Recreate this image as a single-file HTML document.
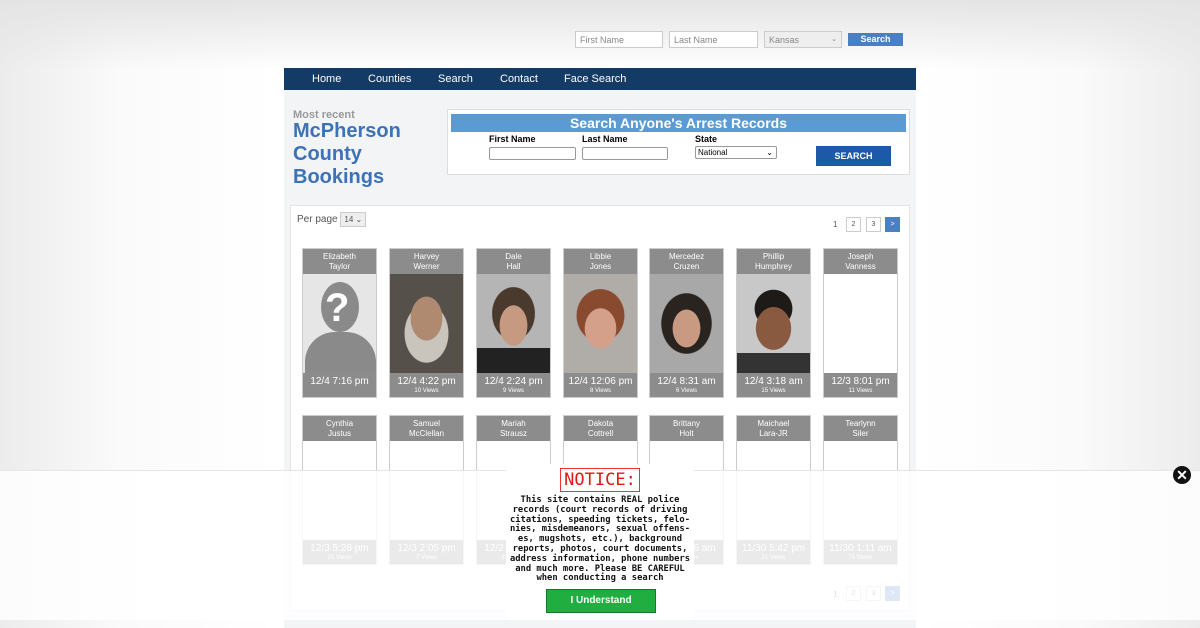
<!DOCTYPE html>
<html><head><meta charset="utf-8"><style>
*{box-sizing:border-box;margin:0;padding:0}
body{width:1200px;height:620px;overflow:hidden;font-family:"Liberation Sans",sans-serif;position:relative;
background:linear-gradient(to right,#ececec 0,#fafafa 120px,#fff 280px,#fff 920px,#fafafa 1080px,#ececec 1200px);}
.topg{position:absolute;left:0;top:0;width:1200px;height:70px;background:linear-gradient(#e4e4e4,rgba(255,255,255,0))}
.ti{position:absolute;top:31px;height:17px;border:1px solid #ccc;background:#fff;font-size:9px;color:#888;padding:3px 4px}
.wrap{position:absolute;left:284px;top:68px;width:632px;height:560px;background:#f2f4f6}
.nav{height:22px;background:#143a66;color:#fff;font-size:11px;position:relative}
.nav span{position:absolute;top:5px}
.mr{position:absolute;left:9px;top:41px;color:#999;font-size:11px;font-weight:bold}
.h1{position:absolute;left:9px;top:52px;color:#3d72b7;font-size:20px;font-weight:bold;line-height:23px}
.sbox{position:absolute;left:163px;top:41px;width:463px;height:66px;background:#fff;border:1px solid #ddd}
.sbar{position:absolute;left:3px;top:4px;width:455px;height:18px;background:#5b9bd5;color:#fff;font-weight:bold;font-size:14px;text-align:center;line-height:18px}
.lb{position:absolute;top:24px;font-size:9px;font-weight:bold}
.in{position:absolute;top:37px;height:13px;border:1px solid #999;border-radius:2px;background:#fff}
.panel{position:absolute;left:6px;top:137px;width:620px;height:406px;background:#fff;border:1px solid #e3e3e3}
.card{position:absolute;width:75px;background:#fff;border:1px solid #ccc}
.nm{height:25px;background:#8c8c8c;color:#fff;font-size:8px;text-align:center;line-height:10px;padding-top:3px}
.ph{height:99px;position:relative;overflow:hidden}
.ft{height:24px;background:#8c8c8c;color:#fff;text-align:center;font-size:10px;padding-top:3px;line-height:11px}
.ft small{display:block;font-size:6px;line-height:9px}
.pg{position:absolute;top:12px;width:15px;height:15px;border:1px solid #ccc;font-size:7px;color:#555;text-align:center;line-height:13px}
.ov{position:absolute;left:0;top:470px;width:1200px;height:150px;background:rgba(255,255,255,0.82);border-top:1px solid #e6e6e6}
.notice{position:absolute;left:506px;top:464px;width:188px;height:156px;background:#fff;text-align:center;font-family:"DejaVu Sans Mono","Liberation Mono",monospace}
</style></head><body>
<div class="topg"></div>
<div class="ti" style="left:575px;width:88px">First Name</div>
<div class="ti" style="left:669px;width:89px">Last Name</div>
<div class="ti" style="left:764px;width:78px;background:#eee">Kansas<span style="float:right;font-size:7px">⌄</span></div>
<div style="position:absolute;left:848px;top:33px;width:55px;height:13px;background:#4a7fc4;color:#fff;font-size:9px;font-weight:bold;text-align:center;line-height:13px">Search</div>
<div class="wrap">
<div class="nav"><span style="left:28px">Home</span><span style="left:84px">Counties</span><span style="left:154px">Search</span><span style="left:216px">Contact</span><span style="left:280px">Face Search</span></div>
<div class="mr">Most recent</div>
<div class="h1">McPherson<br>County<br>Bookings</div>
<div class="sbox"><div class="sbar">Search Anyone's Arrest Records</div>
<div class="lb" style="left:41px">First Name</div><div class="lb" style="left:134px">Last Name</div><div class="lb" style="left:247px">State</div>
<div class="in" style="left:41px;width:87px"></div><div class="in" style="left:134px;width:86px"></div>
<div class="in" style="left:247px;top:36px;width:82px;font-size:8px;padding-left:2px;line-height:11px">National<span style="float:right;padding-right:3px">⌄</span></div>
<div style="position:absolute;left:368px;top:36px;width:75px;height:20px;background:#1b5aa6;color:#fff;font-size:9px;font-weight:bold;text-align:center;line-height:20px">SEARCH</div></div>
<div class="panel">
<div style="position:absolute;left:6px;top:6px;font-size:10px;color:#555">Per page <span style="display:inline-block;border:1px solid #ccc;background:#eee;padding:2px 3px;font-size:8px">14 ⌄</span></div>
<span style="position:absolute;left:542px;top:14px;font-size:8px;color:#555">1</span>
<div class="pg" style="left:555px;top:11px">2</div><div class="pg" style="left:575px;top:11px">3</div><div class="pg" style="left:594px;top:11px;background:#4a7fc4;border-color:#4a7fc4;color:#fff">&gt;</div>
<div class="card" style="left:11px;top:42px"><div class="nm">Elizabeth<br>Taylor</div><div class="ph" style="background:#e6e6e6"><div style="position:absolute;left:18px;top:8px;width:38px;height:50px;border-radius:50%;background:#8a8a8a"></div><div style="position:absolute;left:2px;top:58px;width:71px;height:50px;border-radius:30px 30px 0 0;background:#8a8a8a"></div><div style="position:absolute;left:22px;top:12px;width:30px;color:#fff;font-size:40px;font-weight:bold">?</div></div><div class="ft">12/4 7:16 pm</div></div>
<div class="card" style="left:98px;top:42px"><div class="nm">Harvey<br>Werner</div><div class="ph" style="background:radial-gradient(ellipse 26px 36px at 50% 45%,#b08a70 60%,transparent 62%),radial-gradient(ellipse 36px 48px at 50% 60%,#c9c4bc 60%,transparent 62%),#55504a"></div><div class="ft">12/4 4:22 pm<small>10 Views</small></div></div>
<div class="card" style="left:185px;top:42px"><div class="nm">Dale<br>Hall</div><div class="ph" style="background:radial-gradient(ellipse 22px 32px at 50% 52%,#c69a80 62%,transparent 64%),radial-gradient(ellipse 34px 42px at 50% 40%,#4a3a2e 62%,transparent 64%),linear-gradient(#b5b5b5 75%,#222 75%)"></div><div class="ft">12/4 2:24 pm<small>9 Views</small></div></div>
<div class="card" style="left:272px;top:42px"><div class="nm">Libbie<br>Jones</div><div class="ph" style="background:radial-gradient(ellipse 25px 32px at 50% 55%,#d4a08a 62%,transparent 64%),radial-gradient(ellipse 38px 42px at 50% 42%,#8a4a30 62%,transparent 64%),#b0aca8"></div><div class="ft">12/4 12:06 pm<small>8 Views</small></div></div>
<div class="card" style="left:358px;top:42px"><div class="nm">Mercedez<br>Cruzen</div><div class="ph" style="background:radial-gradient(ellipse 22px 30px at 50% 55%,#c99a82 62%,transparent 64%),radial-gradient(ellipse 40px 48px at 50% 50%,#2a2420 62%,transparent 64%),#a8a8a8"></div><div class="ft">12/4 8:31 am<small>6 Views</small></div></div>
<div class="card" style="left:445px;top:42px"><div class="nm">Phillip<br>Humphrey</div><div class="ph" style="background:radial-gradient(ellipse 28px 34px at 50% 55%,#8a5a40 62%,transparent 64%),radial-gradient(ellipse 30px 30px at 50% 35%,#1e1a18 62%,transparent 64%),linear-gradient(#c8c8c8 80%,#333 80%)"></div><div class="ft">12/4 3:18 am<small>15 Views</small></div></div>
<div class="card" style="left:532px;top:42px"><div class="nm">Joseph<br>Vanness</div><div class="ph"></div><div class="ft">12/3 8:01 pm<small>11 Views</small></div></div>
<div class="card" style="left:11px;top:209px"><div class="nm">Cynthia<br>Justus</div><div class="ph"></div><div class="ft">12/3 5:28 pm<small>23 Views</small></div></div>
<div class="card" style="left:98px;top:209px"><div class="nm">Samuel<br>McClellan</div><div class="ph"></div><div class="ft">12/3 2:05 pm<small>7 Views</small></div></div>
<div class="card" style="left:185px;top:209px"><div class="nm">Mariah<br>Strausz</div><div class="ph"></div><div class="ft">12/2 1:12 pm<small>31 Views</small></div></div>
<div class="card" style="left:272px;top:209px"><div class="nm">Dakota<br>Cottrell</div><div class="ph"></div><div class="ft">12/1 9:16 am<small>9 Views</small></div></div>
<div class="card" style="left:358px;top:209px"><div class="nm">Brittany<br>Holt</div><div class="ph"></div><div class="ft">12/1 2:36 am<small>18 Views</small></div></div>
<div class="card" style="left:445px;top:209px"><div class="nm">Maichael<br>Lara-JR</div><div class="ph"></div><div class="ft">11/30 5:42 pm<small>21 Views</small></div></div>
<div class="card" style="left:532px;top:209px"><div class="nm">Tearlynn<br>Siler</div><div class="ph"></div><div class="ft">11/30 1:11 am<small>75 Views</small></div></div>
<span style="position:absolute;left:542px;top:384px;font-size:8px;color:#555">1</span>
<div class="pg" style="left:555px;top:380px">2</div><div class="pg" style="left:575px;top:380px">3</div><div class="pg" style="left:594px;top:380px;background:#4a7fc4;border-color:#4a7fc4;color:#fff">&gt;</div>
</div>
</div>
<div class="ov"></div>
<div class="notice">
<div style="display:inline-block;margin-top:4px;border:1px solid #e33;color:#e01818;font-size:17px;padding:1px 3px;line-height:20px">NOTICE:</div>
<div style="font-size:8.8px;font-weight:bold;line-height:9.8px;margin-top:4px;color:#111">This site contains REAL police<br>records (court records of driving<br>citations, speeding tickets, felo-<br>nies, misdemeanors, sexual offens-<br>es, mugshots, etc.), background<br>reports, photos, court documents,<br>address information, phone numbers<br>and much more. Please BE CAREFUL<br>when conducting a search</div>
<div style="position:absolute;left:40px;top:125px;width:110px;height:24px;background:#1fae3f;border:1px solid #137a2a;color:#fff;font-family:'Liberation Sans',sans-serif;font-size:10px;font-weight:bold;line-height:22px">I Understand</div>
</div>
<div style="position:absolute;left:1173px;top:466px;width:18px;height:18px;border-radius:50%;background:#111;color:#fff;font-size:14px;font-weight:bold;text-align:center;line-height:18px">✕</div>
</body></html>
